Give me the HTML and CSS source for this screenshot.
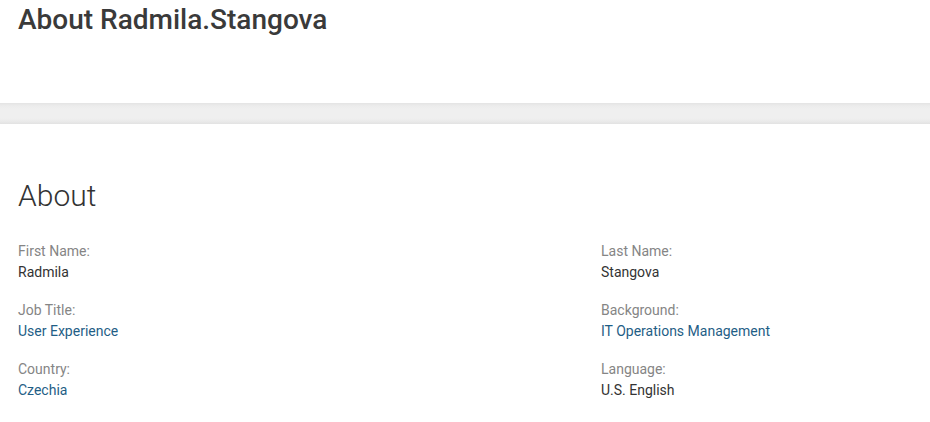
FILE: index.html
```html
<!DOCTYPE html>
<html>
<head>
<meta charset="utf-8">
<link rel="stylesheet" href="styles.css">
</head>
<body>
<header class="page-header">
  <h1 class="page-title">About Radmila.Stangova</h1>
</header>
<div class="band"></div>
<section class="about">
  <h2 class="about-title">About</h2>
  <div class="fields">
    <div class="field">
      <div class="label">First Name:</div>
      <div class="value">Radmila</div>
    </div>
    <div class="field">
      <div class="label">Last Name:</div>
      <div class="value">Stangova</div>
    </div>
    <div class="field">
      <div class="label">Job Title:</div>
      <div class="value link">User Experience</div>
    </div>
    <div class="field">
      <div class="label">Background:</div>
      <div class="value link">IT Operations Management</div>
    </div>
    <div class="field">
      <div class="label">Country:</div>
      <div class="value link">Czechia</div>
    </div>
    <div class="field">
      <div class="label">Language:</div>
      <div class="value">U.S. English</div>
    </div>
  </div>
</section>
</body>
</html>
```

FILE: styles.css
```css
html, body {
  margin: 0;
  padding: 0;
  background: #fff;
  font-family: Roboto, "Liberation Sans", sans-serif;
  color: #333;
}
.page-header {
  height: 103px;
  padding: 0 18px;
  box-sizing: border-box;
}
.page-title {
  margin: 0;
  padding-top: 2px;
  font-size: 28px;
  line-height: 36px;
  font-weight: 500;
  color: #3a3a3a;
}
.band {
  height: 21px;
  background: linear-gradient(to bottom, #e4e4e4 0, #ececec 3px, #efefef 6px, #efefef 15px, #ebebeb 18px, #e2e2e2 21px);
}
.about {
  padding: 54px 18px 0;
}
.about-title {
  margin: 0 0 27px;
  font-size: 30px;
  line-height: 36px;
  font-weight: 300;
  color: #333;
}
.fields {
  display: grid;
  grid-template-columns: 583px 1fr;
  row-gap: 17px;
}
.label {
  font-size: 14px;
  line-height: 21px;
  color: #858585;
}
.value {
  font-size: 14px;
  line-height: 21px;
  color: #333;
}
.link {
  color: #1f5e86;
}
```
